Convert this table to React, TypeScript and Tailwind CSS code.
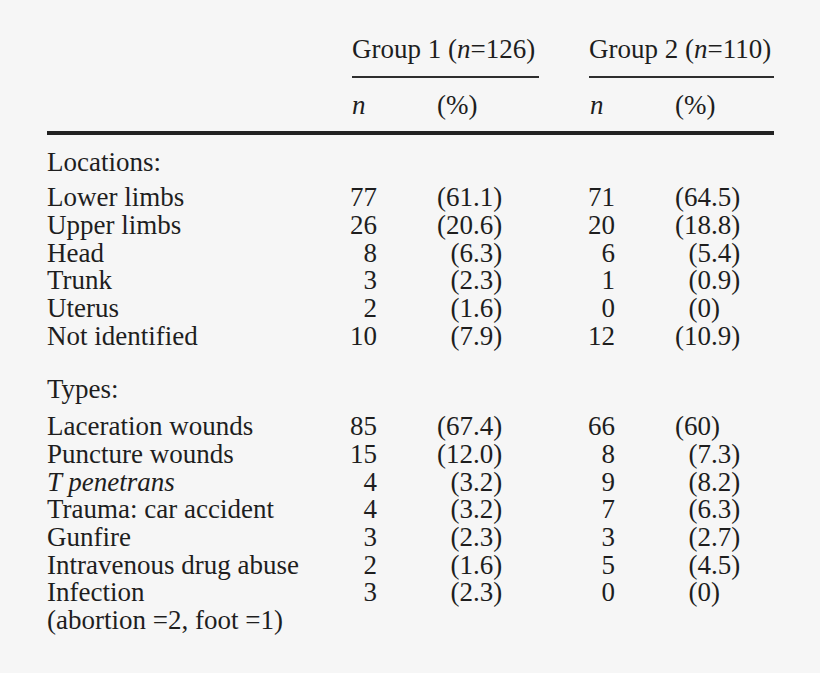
import React from "react";

type Row = { label: React.ReactNode; n1: string; p1: string; i1?: boolean; n2: string; p2: string; i2?: boolean };

const locations: Row[] = [
  { label: "Lower limbs", n1: "77", p1: "(61.1)", n2: "71", p2: "(64.5)" },
  { label: "Upper limbs", n1: "26", p1: "(20.6)", n2: "20", p2: "(18.8)" },
  { label: "Head", n1: "8", p1: "(6.3)", i1: true, n2: "6", p2: "(5.4)", i2: true },
  { label: "Trunk", n1: "3", p1: "(2.3)", i1: true, n2: "1", p2: "(0.9)", i2: true },
  { label: "Uterus", n1: "2", p1: "(1.6)", i1: true, n2: "0", p2: "(0)", i2: true },
  { label: "Not identified", n1: "10", p1: "(7.9)", i1: true, n2: "12", p2: "(10.9)" },
];

const types: Row[] = [
  { label: "Laceration wounds", n1: "85", p1: "(67.4)", n2: "66", p2: "(60)" },
  { label: "Puncture wounds", n1: "15", p1: "(12.0)", n2: "8", p2: "(7.3)", i2: true },
  { label: <i>T penetrans</i>, n1: "4", p1: "(3.2)", i1: true, n2: "9", p2: "(8.2)", i2: true },
  { label: "Trauma: car accident", n1: "4", p1: "(3.2)", i1: true, n2: "7", p2: "(6.3)", i2: true },
  { label: "Gunfire", n1: "3", p1: "(2.3)", i1: true, n2: "3", p2: "(2.7)", i2: true },
  { label: "Intravenous drug abuse", n1: "2", p1: "(1.6)", i1: true, n2: "5", p2: "(4.5)", i2: true },
  {
    label: (
      <>
        Infection
        <br />
        (abortion =2, foot =1)
      </>
    ),
    n1: "3",
    p1: "(2.3)",
    i1: true,
    n2: "0",
    p2: "(0)",
    i2: true,
  },
];

function DataRow({ r }: { r: Row }) {
  return (
    <div className="flex">
      <div className="w-[293px] shrink-0">{r.label}</div>
      <div className="w-[37px] shrink-0 text-right">{r.n1}</div>
      <div className={`w-[201px] shrink-0 pl-[60px] ${r.i1 ? "indent-[13.5px]" : ""}`}>{r.p1}</div>
      <div className="w-[37px] shrink-0 text-right">{r.n2}</div>
      <div className={`w-[159px] shrink-0 pl-[60px] ${r.i2 ? "indent-[13.5px]" : ""}`}>{r.p2}</div>
    </div>
  );
}

export default function App() {
  return (
    <div
      className="w-[820px] h-[673px] bg-[#f6f6f6] text-[#1e1e1e] text-[27px] leading-[27.7px] overflow-hidden"
      style={{ fontFamily: '"Liberation Serif", "Times New Roman", serif' }}
    >
      <div className="pl-[47px] pt-[36px] w-[774px]">
        <div className="flex pl-[305px]">
          <div className="w-[187px] shrink-0 pb-[12.3px] border-b-2 border-[#2e2e2e]">
            Group 1 (<i>n</i>=126)
          </div>
          <div className="w-[50px] shrink-0" />
          <div className="w-[185px] shrink-0 pb-[12.3px] border-b-2 border-[#2e2e2e]">
            Group 2 (<i>n</i>=110)
          </div>
        </div>
        <div className="flex pl-[305px] mt-[14px]">
          <div className="w-[85px] shrink-0">
            <i>n</i>
          </div>
          <div className="w-[152px] shrink-0">(%)</div>
          <div className="w-[86px] shrink-0 pl-px">
            <i>n</i>
          </div>
          <div className="shrink-0">(%)</div>
        </div>
        <div className="mt-[11.3px] h-[4px] bg-[#222222]" />
        <div className="mt-[13.5px]">Locations:</div>
        <div className="mt-[8px]">
          {locations.map((r, i) => (
            <DataRow key={i} r={r} />
          ))}
        </div>
        <div className="mt-[25.8px]">Types:</div>
        <div className="mt-[9.2px]">
          {types.map((r, i) => (
            <DataRow key={i} r={r} />
          ))}
        </div>
      </div>
    </div>
  );
}
